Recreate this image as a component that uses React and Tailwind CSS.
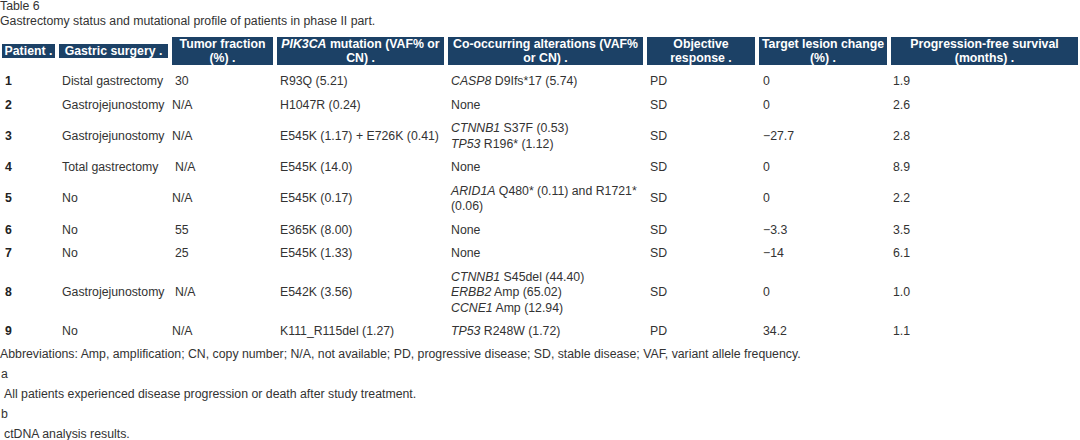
import React from "react";

const cols = "grid grid-cols-[53px_109px_101px_167px_195px_108px_128px_187px] gap-x-[4px] pl-[2px]";

const I = ({ children }) => <i className="italic">{children}</i>;

const rows = [
  { n: "1", s: "Distal gastrectomy", t: "30", tp: true, p: "R93Q (5.21)", c: [<><I>CASP8</I> D9Ifs*17 (5.74)</>], o: "PD", l: "0", f: "1.9" },
  { n: "2", s: "Gastrojejunostomy", t: "N/A", tp: false, p: "H1047R (0.24)", c: ["None"], o: "SD", l: "0", f: "2.6" },
  { n: "3", s: "Gastrojejunostomy", t: "N/A", tp: false, p: "E545K (1.17) + E726K (0.41)", c: [<><I>CTNNB1</I> S37F (0.53)</>, <><I>TP53</I> R196* (1.12)</>], o: "SD", l: "\u221227.7", f: "2.8" },
  { n: "4", s: "Total gastrectomy", t: "N/A", tp: true, p: "E545K (14.0)", c: ["None"], o: "SD", l: "0", f: "8.9" },
  { n: "5", s: "No", t: "N/A", tp: false, p: "E545K (0.17)", c: [<><I>ARID1A</I> Q480* (0.11) and R1721*</>, "(0.06)"], o: "SD", l: "0", f: "2.2" },
  { n: "6", s: "No", t: "55", tp: true, p: "E365K (8.00)", c: ["None"], o: "SD", l: "\u22123.3", f: "3.5" },
  { n: "7", s: "No", t: "25", tp: true, p: "E545K (1.33)", c: ["None"], o: "SD", l: "\u221214", f: "6.1" },
  { n: "8", s: "Gastrojejunostomy", t: "N/A", tp: true, p: "E542K (3.56)", c: [<><I>CTNNB1</I> S45del (44.40)</>, <><I>ERBB2</I> Amp (65.02)</>, <><I>CCNE1</I> Amp (12.94)</>], o: "SD", l: "0", f: "1.0" },
  { n: "9", s: "No", t: "N/A", tp: false, p: "K111_R115del (1.27)", c: [<><I>TP53</I> R248W (1.72)</>], o: "PD", l: "34.2", f: "1.1" },
];

const H = ({ children }) => (
  <div className="bg-[#1c4166] text-white font-bold text-center leading-[14px] px-[1px] whitespace-nowrap">{children}</div>
);

export default function App() {
  return (
    <div className="w-[1080px] h-[440px] overflow-hidden bg-white text-[#333333] text-[12.3px] font-['Liberation_Sans',Arial,sans-serif]">
      <div className="leading-[12px]">Table 6</div>
      <div className="leading-[19px]">Gastrectomy status and mutational profile of patients in phase II part.</div>

      <div className={`${cols} items-center mt-[6px] h-[28px]`}>
        <H>Patient .</H>
        <H>Gastric surgery .</H>
        <H>Tumor fraction<br />(%) .</H>
        <H><I>PIK3CA</I> mutation (VAF% or<br />CN) .</H>
        <H>Co-occurring alterations (VAF%<br />or CN) .</H>
        <H>Objective<br />response .</H>
        <H>Target lesion change<br />(%) .</H>
        <H>Progression-free survival<br />(months) .</H>
      </div>

      <div className="mt-[5px]">
        {rows.map((r) => (
          <div key={r.n} className={`${cols} items-center py-[4px] leading-[15.5px]`}>
            <div className="pl-[3px] font-bold text-[#222222]">{r.n}</div>
            <div className="pl-[3px] whitespace-nowrap">{r.s}</div>
            <div className={r.tp ? "pl-[3px]" : "pl-0"}>{r.t}</div>
            <div className="pl-[3px] whitespace-nowrap">{r.p}</div>
            <div className="pl-[3px] whitespace-nowrap">
              {r.c.map((line, i) => (
                <div key={i}>{line}</div>
              ))}
            </div>
            <div className="pl-[3px]">{r.o}</div>
            <div className="pl-[4px]">{r.l}</div>
            <div className="pl-[2px]">{r.f}</div>
          </div>
        ))}
      </div>

      <div className="leading-[20px]">
        <div>Abbreviations: Amp, amplification; CN, copy number; N/A, not available; PD, progressive disease; SD, stable disease; VAF, variant allele frequency.</div>
        <div className="pl-[1px]">a</div>
        <div className="pl-[4px]">All patients experienced disease progression or death after study treatment.</div>
        <div className="pl-[1px]">b</div>
        <div className="pl-[4px]">ctDNA analysis results.</div>
      </div>
    </div>
  );
}
